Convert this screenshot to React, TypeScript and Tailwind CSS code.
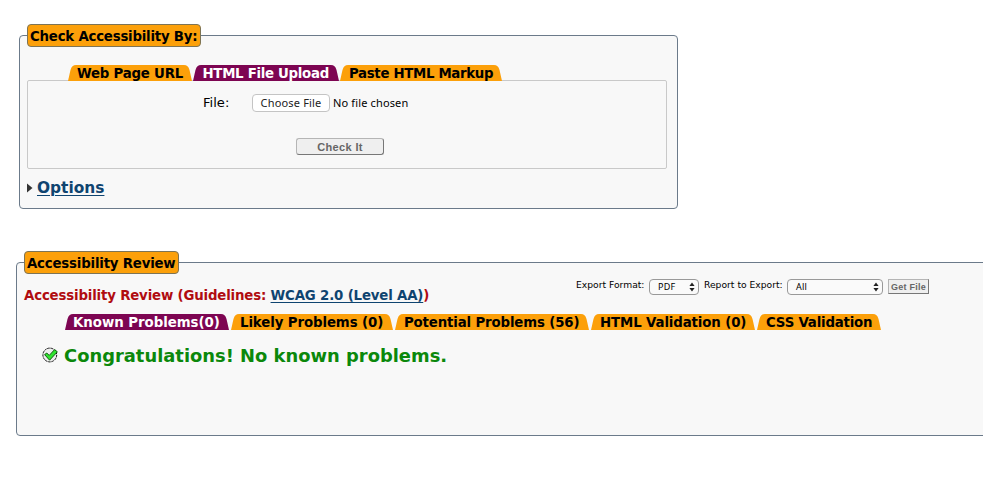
import React from "react";

type TabProps = { label: string; w: number; box: string; text: string; active?: boolean };

function Tab({ label, w, box, text, active }: TabProps) {
  return (
    <button className={`relative block h-4 shrink-0 ${box}`}>
      <svg className="absolute inset-0" width={w} height="16" viewBox={`0 0 ${w} 16`}>
        <path
          d={`M0 16 L2.5 5 Q3.8 0 8 0 H${w - 8} Q${w - 3.8} 0 ${w - 2.5} 5 L${w} 16 Z`}
          fill={active ? "#7d0552" : "#fca00a"}
        />
      </svg>
      <span
        className={`relative block text-left text-[13.33px] leading-[18px] font-bold whitespace-nowrap ${active ? "text-white" : "text-black"} ${text}`}
      >
        {label}
      </span>
    </button>
  );
}

function Arrows() {
  return (
    <svg width="6" height="10" viewBox="0 0 6 10" fill="#222">
      <path d="M3 0.6 L5.6 4 H0.4 Z M3 9.4 L5.6 6 H0.4 Z" />
    </svg>
  );
}

export default function App() {
  return (
    <div className="h-[487px] w-[983px] overflow-hidden bg-white pt-[35px] font-['DejaVu_Sans',Verdana,sans-serif] text-black">
      <section className="ml-[19px] h-[174px] w-[659px] rounded-[4px] border border-[#6b7a8a] bg-[#f8f8f8] pl-[7px]">
        <h2 className="-mt-[12px] h-[23px] w-[174px] rounded-[4px] border border-[#7d7455] bg-[#fca00a] pl-[2px] text-[13.33px] leading-[23px] font-bold tracking-[-0.22px] whitespace-nowrap">
          Check Accessibility By:
        </h2>
        <div className="mt-[18px] ml-[41px] flex gap-[1px]">
          <Tab label="Web Page URL" w={124} box="w-[124px]" text="pl-[9px] tracking-[-0.22px]" />
          <Tab label="HTML File Upload" w={146} box="w-[146px]" text="pl-[9.5px] tracking-[-0.3px]" active />
          <Tab label="Paste HTML Markup" w={162} box="w-[162px]" text="pl-[9px] tracking-[-0.33px]" />
        </div>
        <div className="-mt-px h-[89px] w-[640px] rounded-[2px] border border-[#c9c9c9]">
          <div className="flex pt-[13px] pl-[175px]">
            <label className="w-[49px] text-[13.1px] leading-[18px]">File:</label>
            <button className="h-[18px] w-[78px] rounded-[4px] border border-[#c4c4c4] bg-white font-['Noto_Sans',sans-serif] text-[11px] leading-4 tracking-[0.17px] whitespace-nowrap text-[#222]">
              Choose File
            </button>
            <span className="ml-[3px] font-['Noto_Sans',sans-serif] text-[11px] leading-[18px] tracking-[0.14px] whitespace-nowrap">
              No file chosen
            </span>
          </div>
          <button className="mt-[26px] ml-[268px] block h-[17px] w-[88px] rounded-[3px] border border-t-[#b5b5b5] border-r-[#777] border-b-[#777] border-l-[#b5b5b5] bg-[#efefef] font-['Liberation_Sans',sans-serif] text-[11px] leading-4 font-bold tracking-[0.35px] text-[#666]">
            Check It
          </button>
        </div>
        <div className="mt-[9px] flex items-center">
          <svg width="6" height="10" viewBox="0 0 6 10">
            <path d="M0 0.5 L5.5 5 L0 9.5 Z" fill="#333" />
          </svg>
          <a className="ml-[4px] text-[15.4px] leading-[20px] font-bold text-[#0f4470] underline decoration-1 underline-offset-2">
            Options
          </a>
        </div>
      </section>

      <section className="mt-[53px] ml-[16px] h-[174px] w-[980px] rounded-[4px] border border-[#6b7a8a] bg-[#f8f8f8] pl-[7px]">
        <h2 className="-mt-[12px] h-[23px] w-[155px] rounded-[4px] border border-[#7d7455] bg-[#fca00a] pl-[2px] text-[13.33px] leading-[23px] font-bold tracking-[-0.2px] whitespace-nowrap">
          Accessibility Review
        </h2>
        <div className="flex h-[40px]">
          <h3 className="w-[552px] pt-[13px] text-[13.33px] leading-[18px] font-bold tracking-[-0.17px] whitespace-nowrap text-[#b00c10]">
            Accessibility Review (Guidelines:{" "}
            <a className="text-[#0f4470] underline decoration-1 underline-offset-2">WCAG 2.0 (Level AA)</a>)
          </h3>
          <div className="flex pt-[4px] text-[9.2px] leading-[14px] whitespace-nowrap">
            <span className="w-[73px]">Export Format:</span>
            <div className="mt-px flex h-4 w-[50px] items-center justify-between rounded-[4px] border border-[#999] bg-[#fafafa] pr-[3px] pl-[8px] font-['Noto_Sans',sans-serif] text-[9px] tracking-[0.2px]">
              <span>PDF</span>
              <Arrows />
            </div>
            <span className="ml-[5px] w-[83px]">Report to Export:</span>
            <div className="mt-px flex h-4 w-[96px] items-center justify-between rounded-[4px] border border-[#999] bg-[#fafafa] pr-[3px] pl-[8px] font-['Noto_Sans',sans-serif] text-[9px] tracking-[0.2px]">
              <span>All</span>
              <Arrows />
            </div>
            <button className="mt-px ml-[5px] h-[15px] w-[41px] border border-t-[#b5b5b5] border-r-[#777] border-b-[#777] border-l-[#b5b5b5] bg-[#efefef] font-['Liberation_Sans',sans-serif] text-[9px] leading-[14px] font-bold tracking-[0.25px] text-[#666]">
              Get File
            </button>
          </div>
        </div>
        <div className="ml-[41px] flex gap-[2px]">
          <Tab label="Known Problems(0)" w={164} box="w-[164px]" text="pl-[8px] tracking-[-0.03px]" active />
          <Tab label="Likely Problems (0)" w={162} box="w-[162px]" text="pl-[9px] tracking-[-0.1px]" />
          <Tab label="Potential Problems (56)" w={194} box="w-[194px]" text="pl-[9px] tracking-[-0.15px]" />
          <Tab label="HTML Validation (0)" w={164} box="w-[164px]" text="pl-[9px] tracking-[-0.12px]" />
          <Tab label="CSS Validation" w={124} box="w-[124px]" text="pl-[9px] tracking-[-0.2px]" />
        </div>
        <div className="mt-[14px] ml-[18px] flex items-center">
          <svg className="-mt-[3px]" width="16" height="16" viewBox="0 0 16 16">
            <circle cx="7.8" cy="8" r="6.9" fill="#eee" stroke="#111" strokeWidth="1" strokeDasharray="2.5 0.8" />
            <path d="M2.6 7.6 L4.8 6 L7.2 8.4 L12.6 2.6 L15.4 4.8 L7.6 13.2 Z" fill="#2fe52f" stroke="#064d06" strokeWidth="0.9" />
          </svg>
          <p className="ml-[6px] text-[17.9px] leading-[24px] font-bold whitespace-nowrap text-[#0b880b]">
            Congratulations! No known problems.
          </p>
        </div>
      </section>
    </div>
  );
}
